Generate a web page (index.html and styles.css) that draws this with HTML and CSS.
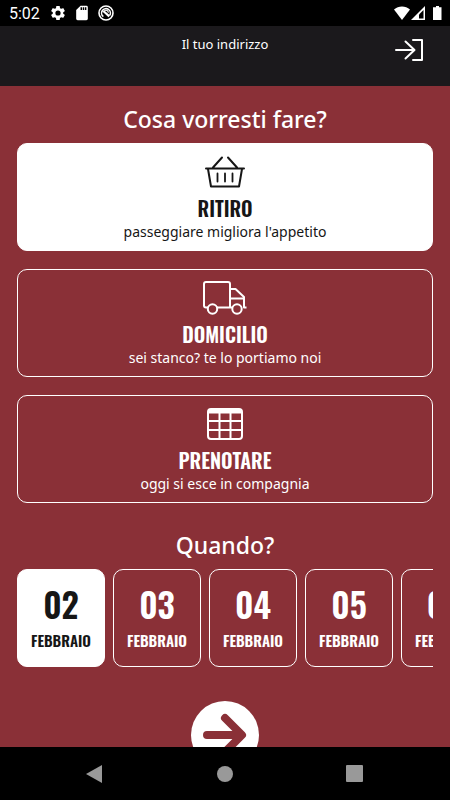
FILE: index.html
```html
<!DOCTYPE html>
<html lang="it">
<head>
    <meta charset="UTF-8">
    <meta name="viewport" content="width=device-width, initial-scale=1.0">
    <title>Ordina</title>
    <link rel="stylesheet" href="styles.css">
</head>
<body>
    <div class="status-bar">
        <span class="clock">5:02</span>
        <svg class="status-icon" viewBox="1 1 22 22" fill="currentColor"><path d="M19.14 12.94c.04-.3.06-.61.06-.94s-.02-.64-.07-.94l2.03-1.58a.49.49 0 0 0 .12-.61l-1.92-3.32a.49.49 0 0 0-.59-.22l-2.39.96c-.5-.38-1.03-.7-1.62-.94l-.36-2.54a.48.48 0 0 0-.48-.41h-3.84a.47.47 0 0 0-.47.41l-.36 2.54c-.59.24-1.13.57-1.62.94l-2.39-.96a.48.48 0 0 0-.59.22L2.74 8.87a.47.47 0 0 0 .12.61l2.03 1.58c-.05.3-.09.63-.09.94s.02.64.07.94l-2.03 1.58a.49.49 0 0 0-.12.61l1.92 3.32c.12.22.37.29.59.22l2.39-.96c.5.38 1.03.7 1.62.94l.36 2.54c.05.24.24.41.48.41h3.84c.24 0 .44-.17.47-.41l.36-2.54c.59-.24 1.13-.56 1.62-.94l2.39.96c.22.08.47 0 .59-.22l1.92-3.32a.47.47 0 0 0-.12-.61zM12 15.6a3.6 3.6 0 1 1 0-7.2 3.6 3.6 0 0 1 0 7.2z"/></svg>
        <svg class="status-icon" viewBox="1 1 22 22" fill="currentColor"><path d="M18 2h-8L4 8v12a2 2 0 0 0 2 2h12a2 2 0 0 0 2-2V4a2 2 0 0 0-2-2zm-6 6h-2V4h2zm3 0h-2V4h2zm3 0h-2V4h2z"/></svg>
        <svg class="status-icon" viewBox="0 0 24 24" fill="none" stroke="currentColor" stroke-width="2.4"><circle cx="12" cy="12" r="10.500"/><path d="M17.6 15.5A6.6 6.6 0 1 0 8 17.3"/><path d="M8 9l9 8" stroke-width="3.4"/><path d="M9.5 8.5c3-2 6 0 6 3" stroke-width="1.6"/></svg>
        <span class="spacer"></span>
        <svg class="signal-icons" viewBox="0 0 50 16" fill="currentColor"><path d="M1 4.600C5.500.4 12.500.4 17 4.600L9 15z"/><path d="M32 1v14H18z"/><path d="M26 9.500V13.500h4.500V5z" fill="#000"/><path d="M43 1h3v1.300h2.500V15h-8.500V2.300H43z"/></svg>
    </div>

    <header class="header">
        <p class="address">Il tuo indirizzo</p>
        <a class="login" href="#" aria-label="Accedi">
            <svg viewBox="0 0 28 22" fill="none" stroke="currentColor" stroke-width="2" stroke-linecap="round" stroke-linejoin="round"><path d="M1 11h18M10.500 2.500L19.500 11l-9 8.500M18 1h9v20h-9"/></svg>
        </a>
    </header>

    <main class="content">
        <h1 class="title">Cosa vorresti fare?</h1>
        <div class="services">
            <button class="card service selected">
                <svg class="service-icon" viewBox="0 0 44 34" fill="none" stroke="currentColor" stroke-width="2" stroke-linecap="round" stroke-linejoin="round"><path d="M3 13.500h38M10 12.500L19 2.500M34 12.500L25 2.500M5 14l3 17.500h28L39 14"/><path d="M14.500 18.500v8M22 18.500v8M29.500 18.500v8" stroke-width="1.800"/></svg>
                <span class="service-name">RITIRO</span>
                <span class="service-text">passeggiare migliora l'appetito</span>
            </button>
            <button class="card service">
                <svg class="service-icon" viewBox="0 0 44 34" fill="none" stroke="currentColor" stroke-width="2" stroke-linejoin="round"><path d="M5 26.500H3a2 2 0 0 1-2-2V3a2 2 0 0 1 2-2H25a2 2 0 0 1 2 2v23.500H14M27 8h5.500l8.500 8v10.500h2.500M27 17.500h14M27 26.500h3"/><circle cx="9.500" cy="28" r="4.700"/><circle cx="34" cy="28" r="4.700"/></svg>
                <span class="service-name">DOMICILIO</span>
                <span class="service-text">sei stanco? te lo portiamo noi</span>
            </button>
            <button class="card service">
                <svg class="service-icon" viewBox="0 0 44 34" fill="none" stroke="currentColor" stroke-width="2"><rect x="5" y="2" width="34" height="30" rx="3"/><path d="M5 4.500h34" stroke-width="4"/><path d="M5 14h34M5 23h34M16.500 4v28M27.500 4v28"/></svg>
                <span class="service-name">PRENOTARE</span>
                <span class="service-text">oggi si esce in compagnia</span>
            </button>
        </div>

        <h2 class="title">Quando?</h2>
        <div class="dates">
            <button class="card date selected"><span class="day">02</span><span class="month">FEBBRAIO</span></button>
            <button class="card date"><span class="day">03</span><span class="month">FEBBRAIO</span></button>
            <button class="card date"><span class="day">04</span><span class="month">FEBBRAIO</span></button>
            <button class="card date"><span class="day">05</span><span class="month">FEBBRAIO</span></button>
            <button class="card date"><span class="day">06</span><span class="month">FEBBRAIO</span></button>
        </div>

        <button class="next" aria-label="Avanti">
            <svg viewBox="0 0 44 44" fill="none" stroke="currentColor" stroke-width="8" stroke-linecap="round" stroke-linejoin="round"><path d="M4 22h34M22 5l17 17-17 17"/></svg>
        </button>
    </main>

    <nav class="nav-bar">
        <button class="nav-button" aria-label="Indietro"><svg viewBox="0 0 18 18" fill="currentColor"><path d="M0 9L16 0v18z"/></svg></button>
        <button class="nav-button" aria-label="Home"><svg viewBox="0 0 18 18" fill="currentColor"><circle cx="9" cy="9" r="8"/></svg></button>
        <button class="nav-button" aria-label="Recenti"><svg viewBox="0 0 18 18" fill="currentColor"><rect width="17" height="17" rx="1"/></svg></button>
    </nav>
</body>
</html>
```
FILE: styles.css
```css
* {
    box-sizing: border-box;
}

body {
    margin: 0;
    height: 100vh;
    display: flex;
    flex-direction: column;
    font-family: "Noto Sans", sans-serif;
    background: #8a3037;
    color: white;
}

button {
    font-family: inherit;
    cursor: pointer;
}

svg {
    display: block;
}

.status-bar {
    display: flex;
    align-items: center;
    gap: 8px;
    height: 26px;
    flex-shrink: 0;
    padding: 0 7px 0 9px;
    background: black;
}

.clock {
    font-family: Roboto, sans-serif;
    font-size: 16px;
    margin-right: 2px;
}

.status-icon {
    width: 16px;
    height: 16px;
}

.spacer {
    flex: 1;
}

.signal-icons {
    width: 50px;
    height: 16px;
}

.header {
    display: grid;
    grid-template-columns: 1fr auto 1fr;
    height: 60px;
    flex-shrink: 0;
    padding: 9px 27px;
    background: #1b191c;
}

.address {
    grid-column: 2;
    margin: 0;
    font-size: 13px;
    line-height: 18px;
}

.login {
    justify-self: end;
    margin-top: 4px;
    color: white;
}

.login svg {
    width: 28px;
    height: 22px;
}

.content {
    flex: 1;
    min-height: 0;
    overflow: hidden;
    padding: 16px 17px 0;
}

.title {
    margin: 0 0 7px;
    font-size: 23px;
    font-weight: 500;
    line-height: 34px;
    text-align: center;
}

.services {
    display: flex;
    flex-direction: column;
    gap: 18px;
    margin-bottom: 25px;
}

.card {
    display: flex;
    flex-direction: column;
    align-items: center;
    border: 1px solid white;
    border-radius: 10px;
    background: none;
    color: white;
}

.card.selected {
    background: white;
    color: #161616;
}

.service {
    padding: 11px 10px 8px;
}

.service-icon {
    width: 44px;
    height: 34px;
    margin-bottom: 5px;
}

.service-name,
.day,
.month {
    font-family: Oswald, sans-serif;
    font-weight: 600;
}

.service-name {
    font-size: 20px;
    line-height: 28px;
}

.service-text {
    font-size: 14px;
    line-height: 20px;
}

.dates {
    display: flex;
    gap: 8px;
    overflow: hidden;
}

.date {
    flex: 0 0 88px;
    padding: 12px 0;
}

.day {
    font-size: 34px;
    line-height: 44px;
}

.month {
    font-size: 15px;
    line-height: 28px;
}

.next {
    display: block;
    width: 68px;
    height: 68px;
    margin: 34px auto 0;
    padding: 12px;
    border: none;
    border-radius: 50%;
    background: white;
    color: #8a3037;
}

.nav-bar {
    display: flex;
    justify-content: center;
    gap: 112px;
    height: 53px;
    flex-shrink: 0;
    background: black;
}

.nav-button {
    padding: 0;
    border: none;
    background: none;
    color: #999;
}

.nav-button svg {
    width: 18px;
    height: 18px;
}
```
